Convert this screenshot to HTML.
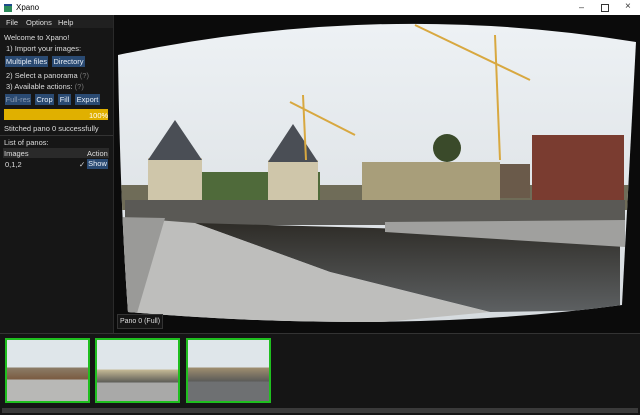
<!DOCTYPE html>
<html><head><style>
body{margin:0;width:640px;height:415px;overflow:hidden;background:#0b0b0b;font-family:"Liberation Sans",sans-serif;font-size:7.5px;color:#ddd;position:relative}
.a{position:absolute}
.btn{position:absolute;background:#2a4a72;color:#e8eef6;height:11px;line-height:11px;text-align:center;font-size:7.5px}
</style></head><body>
<div class="a" style="left:0;top:0;width:640px;height:15px;background:#fff;color:#000">
<div class="a" style="left:4px;top:4px;width:8px;height:6px;background:#2c8a5a;border-top:2px solid #1d4a8a"></div>
<div class="a" style="left:16px;top:3px;font-size:8px">Xpano</div>
<div class="a" style="left:579px;top:2px;font-size:9px;color:#333">–</div>
<div class="a" style="left:601px;top:4px;width:6px;height:6px;border:1px solid #333"></div>
<div class="a" style="left:625px;top:1px;font-size:10px;color:#333">×</div>
</div>
<div class="a" style="left:0;top:15px;width:113px;height:318px;background:#161616"></div>
<div class="a" style="left:113px;top:15px;width:1px;height:318px;background:#2a2a2a"></div>
<div class="a" style="left:0;top:15px;width:113px;height:13px;background:#202020"></div>
<div class="a" style="left:6px;top:18px">File</div><div class="a" style="left:26px;top:18px">Options</div><div class="a" style="left:58px;top:18px">Help</div>
<div class="a" style="left:4px;top:33px">Welcome to Xpano!</div>
<div class="a" style="left:6px;top:44px">1) Import your images:</div>
<div class="btn" style="left:5px;top:56px;width:43px">Multiple files</div>
<div class="btn" style="left:52px;top:56px;width:33px">Directory</div>
<div class="a" style="left:6px;top:71px">2) Select a panorama <span style="color:#777">(?)</span></div>
<div class="a" style="left:6px;top:82px">3) Available actions: <span style="color:#777">(?)</span></div>
<div class="btn" style="left:5px;top:94px;width:26px;color:#8a9ab0">Full-res</div>
<div class="btn" style="left:35px;top:94px;width:19px">Crop</div>
<div class="btn" style="left:58px;top:94px;width:13px">Fill</div>
<div class="btn" style="left:75px;top:94px;width:25px">Export</div>
<div class="a" style="left:4px;top:109px;width:104px;height:11px;background:#e0b000"></div>
<div class="a" style="left:89px;top:111px;color:#fff">100%</div>
<div class="a" style="left:4px;top:124px">Stitched pano 0 successfully</div>
<div class="a" style="left:0;top:135px;width:113px;height:1px;background:#333"></div>
<div class="a" style="left:4px;top:138px">List of panos:</div>
<div class="a" style="left:3px;top:148px;width:106px;height:10px;background:#2a2a2a"></div>
<div class="a" style="left:4px;top:149px">Images</div><div class="a" style="left:87px;top:149px">Action</div>
<div class="a" style="left:5px;top:160px">0,1,2</div><div class="a" style="left:79px;top:160px">✓</div>
<div class="btn" style="left:87px;top:159px;width:21px;height:10px;line-height:10px">Show</div>
<svg class="a" style="left:114px;top:15px" width="526" height="318" viewBox="114 15 526 318">
<defs><clipPath id="c"><path d="M118,55 Q380,0 636,42 L622,305 Q400,335 128,312 Q120,200 118,55Z"/></clipPath>
<linearGradient id="s" x1="0" y1="0" x2="0" y2="1"><stop offset="0" stop-color="#eef2f5"/><stop offset="1" stop-color="#d5dade"/></linearGradient>
<linearGradient id="w" x1="0" y1="0" x2="0" y2="1"><stop offset="0" stop-color="#2e2c27"/><stop offset="1" stop-color="#5d6062"/></linearGradient></defs>
<g clip-path="url(#c)">
<rect x="110" y="15" width="530" height="320" fill="url(#s)"/>
<rect x="110" y="185" width="530" height="25" fill="#6f6c58"/>
<rect x="200" y="172" width="120" height="30" fill="#4f6a3a"/>
<rect x="148" y="158" width="54" height="47" fill="#cfc6aa"/><path d="M148,160 L175,120 L202,160Z" fill="#4a4e55"/>
<rect x="268" y="160" width="50" height="40" fill="#cfc6aa"/><path d="M268,162 L293,124 L318,162Z" fill="#4a4e55"/>
<rect x="362" y="162" width="138" height="38" fill="#a89e7a"/>
<rect x="500" y="164" width="30" height="34" fill="#6a5a4a"/>
<rect x="532" y="135" width="92" height="72" fill="#7a3c30"/>
<circle cx="447" cy="148" r="14" fill="#3a4a2a"/>
<path d="M495,35 L500,160 M415,25 L530,80 M290,102 L355,135 M303,95 L306,160" stroke="#d8a840" stroke-width="2"/>
<rect x="125" y="200" width="500" height="25" fill="#5a5955"/>
<path d="M195,223 L620,235 L620,310 L490,312 L330,272Z" fill="url(#w)"/>
<path d="M385,222 L625,220 L625,247 L385,232Z" fill="#a0a09e"/>
<path d="M118,217 L195,223 L330,272 L490,312 L300,330 L118,320Z" fill="#bebebc"/>
<path d="M118,217 L165,218 L135,320 L118,320Z" fill="#9a9a98"/>
</g>
</svg>
<div class="a" style="left:117px;top:314px;width:44px;height:13px;background:#151515;border:1px solid #333;line-height:13px;text-align:center;font-size:7px">Pano 0 (Full)</div>
<div class="a" style="left:0;top:333px;width:640px;height:82px;background:#151515"></div>
<div class="a" style="left:0;top:333px;width:640px;height:1px;background:#333"></div>
<div class="a" style="left:5px;top:338px;width:81px;height:61px;border:2px solid #1fbf1f;background:linear-gradient(#dfe6ea 0,#dfe6ea 45%,#8c7d68 45%,#7a5a40 65%,#b8b8b6 65%)"></div>
<div class="a" style="left:95px;top:338px;width:81px;height:61px;border:2px solid #1fbf1f;background:linear-gradient(#dfe6ea 0,#dfe6ea 48%,#c9bd98 48%,#5a5a55 70%,#a9a9a8 70%)"></div>
<div class="a" style="left:186px;top:338px;width:81px;height:61px;border:2px solid #1fbf1f;background:linear-gradient(#dfe6ea 0,#dfe6ea 45%,#a08f70 45%,#5a5a58 68%,#6e7072 68%)"></div>
<div class="a" style="left:2px;top:408px;width:636px;height:5px;background:#3a3a3a"></div>
</body></html>
